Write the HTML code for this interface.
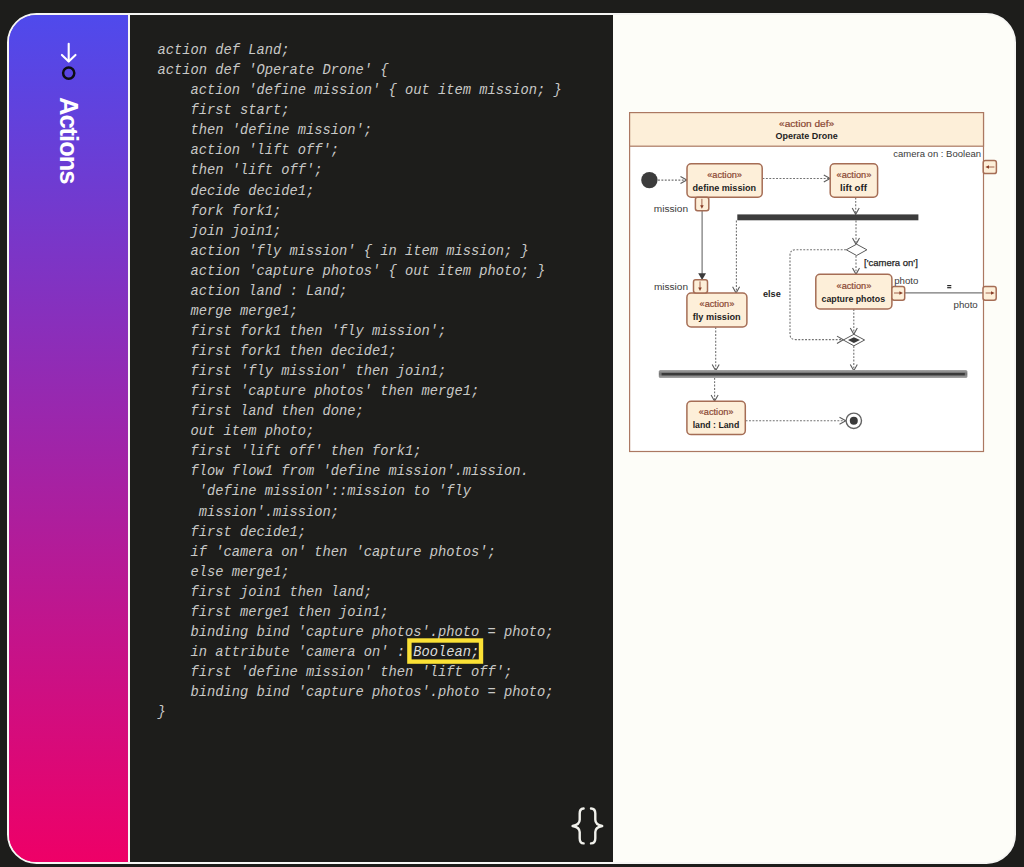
<!DOCTYPE html>
<html>
<head>
<meta charset="utf-8">
<title>Actions</title>
<style>
  html, body { margin: 0; padding: 0; }
  body {
    width: 1024px; height: 867px; overflow: hidden;
    background: #1d1d1b;
    font-family: "Liberation Sans", sans-serif;
    position: relative;
  }
  .frame {
    position: absolute; left: 6.5px; top: 13px;
    width: 1005.8px; height: 846.5px;
    border: 2px solid #f6f6f4;
    border-radius: 29.5px;
    overflow: hidden;
    background:
      linear-gradient(180deg, #4f4aec 0%, #ee0067 100%) 0 0 / 121px 100% no-repeat,
      linear-gradient(#fdfdf8, #fdfdf8) 100% 0 / 403px 100% no-repeat,
      #1d1d1b;
  }
  .side {
    position: absolute; left: 0; top: 0; width: 119.5px; height: 100%;
    background: linear-gradient(180deg, #4f4aec 0%, #ee0067 100%);
  }
  .divider {
    position: absolute; left: 119.5px; top: 0; width: 2.3px; height: 100%;
    background: #f6f6f4;
  }
  .code {
    position: absolute; left: 121.8px; top: 0; width: 483px; height: 100%;
    background: #1d1d1b;
  }
  .right {
    position: absolute; left: 604.6px; top: 0; right: 0; height: 100%;
    background: #fdfdf8;
  }
  .title {
    position: absolute; left: 0; top: 0;
    transform-origin: 0 0;
    transform: translate(71.5px, 82px) rotate(90deg);
    color: #ffffff; font-weight: bold; font-size: 25.5px;
    letter-spacing: -1.0px;
    white-space: nowrap; line-height: 1;
  }
  pre.src {
    position: absolute; left: 27.2px; top: 26.1px; margin: 0;
    font-family: "Liberation Mono", monospace;
    font-style: italic;
    font-size: 13.75px; line-height: 20.06px;
    color: #c9c9c7;
    white-space: pre;
  }
  .hl { color: #dcdcda; }
  .hlbox {
    position: absolute; left: 277.2px; top: 623.3px;
    width: 67.2px; height: 16.7px;
    border: 4.4px solid #fbe135;
  }
</style>
</head>
<body>
<div class="frame">
  <div class="side">
    <svg width="120" height="120" style="position:absolute;left:0;top:0" viewBox="0 0 120 120">
      <g fill="none" stroke="#ffffff" stroke-width="2.1" stroke-linecap="round" stroke-linejoin="round">
        <path d="M59.7 28.7 L59.7 46.2"/>
        <path d="M52.9 39.9 L59.7 46.5 L66.5 39.9"/>
      </g>
      <circle cx="59.7" cy="58.1" r="5.6" fill="none" stroke="#0d0d14" stroke-width="2.5"/>
    </svg>
    <div class="title">Actions</div>
  </div>
  <div class="divider"></div>
  <div class="code">
<pre class="src">action def Land;
action def 'Operate Drone' {
    action 'define mission' { out item mission; }
    first start;
    then 'define mission';
    action 'lift off';
    then 'lift off';
    decide decide1;
    fork fork1;
    join join1;
    action 'fly mission' { in item mission; }
    action 'capture photos' { out item photo; }
    action land : Land;
    merge merge1;
    first fork1 then 'fly mission';
    first fork1 then decide1;
    first 'fly mission' then join1;
    first 'capture photos' then merge1;
    first land then done;
    out item photo;
    first 'lift off' then fork1;
    flow flow1 from 'define mission'.mission.
     'define mission'::mission to 'fly
     mission'.mission;
    first decide1;
    if 'camera on' then 'capture photos';
    else merge1;
    first join1 then land;
    first merge1 then join1;
    binding bind 'capture photos'.photo = photo;
    in attribute 'camera on' : <span class="hl">Boolean;</span>
    first 'define mission' then 'lift off';
    binding bind 'capture photos'.photo = photo;
}</pre>
    <svg width="483" height="700" style="position:absolute;left:0;top:0;overflow:visible"><rect x="279.4" y="625.5" width="71.6" height="21.1" fill="none" stroke="#fbe135" stroke-width="4.4"/></svg>
    <svg width="40" height="44" viewBox="0 0 40 44" style="position:absolute;left:441px;top:790px">
      <g fill="none" stroke="#f1f1ec" stroke-width="2.4" stroke-linecap="round" stroke-linejoin="round">
        <path d="M12.6 3.5 C9.4 3.5 8.7 5.4 8.7 8.6 L8.7 14.8 C8.7 18.2 6 20.2 1.6 20.95 C6 21.7 8.7 23.7 8.7 27.1 L8.7 33.3 C8.7 36.5 9.4 38.4 12.6 38.4"/>
        <path d="M20 3.5 C23.4 3.5 24.3 5.4 24.3 8.6 L24.3 14.8 C24.3 18.2 27 20.2 31.2 20.95 C27 21.7 24.3 23.7 24.3 27.1 L24.3 33.3 C24.3 36.5 23.4 38.4 20 38.4"/>
      </g>
    </svg>
  </div>
  <div class="right">
    <!--DIAGRAM-->
  </div>
</div>
<!--SVGSTART-->
<svg width="1024" height="867" viewBox="0 0 1024 867" style="position:absolute;left:0;top:0" font-family="Liberation Sans, sans-serif">
  <defs>
    <linearGradient id="joing" x1="0" y1="0" x2="0" y2="1">
      <stop offset="0" stop-color="#a6a6a6"/><stop offset="0.3" stop-color="#858585"/><stop offset="0.5" stop-color="#707070"/><stop offset="0.7" stop-color="#858585"/><stop offset="1" stop-color="#a6a6a6"/>
    </linearGradient>
  </defs>
  <!-- outer action def frame -->
  <rect x="629.6" y="112.6" width="353.9" height="338.9" fill="#ffffff" stroke="#ab7862" stroke-width="1.2"/>
  <rect x="629.6" y="112.6" width="353.9" height="33.6" fill="#fdefd9" stroke="#ab7862" stroke-width="1.2"/>
  <text x="806.6" y="126.5" font-size="9.6" fill="#8a4632" stroke="#8a4632" stroke-width="0.2" text-anchor="middle" textLength="55.2" lengthAdjust="spacingAndGlyphs">«action def»</text>
  <text x="806.6" y="139.2" font-size="9" font-weight="bold" fill="#1e1e1e" text-anchor="middle" textLength="62.3" lengthAdjust="spacingAndGlyphs">Operate Drone</text>
  <text x="981" y="157.3" font-size="9.5" fill="#3a3a3a" text-anchor="end" textLength="87.7" lengthAdjust="spacingAndGlyphs">camera on : Boolean</text>

  <!-- edges: dotted control flows -->
  <g fill="none" stroke="#727272" stroke-width="1.1" stroke-dasharray="1.9 1.5">
    <path d="M658 180.1 H686"/>
    <path d="M762.5 178.5 H829.5"/>
    <path d="M855.7 197.5 V214"/>
    <path d="M856 220.5 V244"/>
    <path d="M856 255.8 V274"/>
    <path d="M736.4 220.5 V292.5"/>
    <path d="M846 249.7 H795.5 Q790 249.7 790 255.2 V334.1 Q790 339.6 795.5 339.6 H843"/>
    <path d="M853.8 309.2 V334"/>
    <path d="M853.8 346 V370.4"/>
    <path d="M715.7 327.2 V370.4"/>
    <path d="M714.6 377.8 V400.8"/>
    <path d="M745.6 420.8 H845.4"/>
  </g>
  <!-- open arrowheads -->
  <g fill="none" stroke="#5c5c5c" stroke-width="1.1">
    <path d="M680.5 176.6 L686.8 180.1 L680.5 183.6"/>
    <path d="M823.8 175 L830.1 178.5 L823.8 182"/>
    <path d="M852.2 208 L855.7 214.3 L859.2 208"/>
    <path d="M852.5 238 L856 244.3 L859.5 238"/>
    <path d="M852.5 268 L856 274.3 L859.5 268"/>
    <path d="M732.6 286.7 L736.1 293 L739.6 286.7"/>
    <path d="M837 336.1 L843.3 339.8 L837 343.5"/>
    <path d="M850.3 328 L853.8 334.3 L857.3 328"/>
    <path d="M850.3 364.4 L853.8 370.7 L857.3 364.4"/>
    <path d="M712.2 364.4 L715.7 370.7 L719.2 364.4"/>
    <path d="M711.1 394.9 L714.6 401.2 L718.1 394.9"/>
    <path d="M839.5 417.3 L845.8 420.8 L839.5 424.3"/>
  </g>

  <!-- initial node -->
  <circle cx="649.4" cy="180.1" r="8.2" fill="#3c3c3c"/>

  <!-- fork bar -->
  <rect x="737.3" y="214.4" width="181.1" height="5.9" fill="#3c3c3c"/>
  <!-- join bar -->
  <rect x="658.8" y="370" width="308.6" height="8" rx="1.6" fill="url(#joing)"/>
  <rect x="661.6" y="372.9" width="303.2" height="2.5" fill="#3a3a3a"/>

  <!-- decision -->
  <path d="M846.3 249.8 L856.6 244.2 L866.9 249.8 L856.6 255.5 Z" fill="#ffffff" stroke="#5a5a5a" stroke-width="1"/>
  <!-- merge -->
  <path d="M843.3 340 L853.9 334.3 L864.6 340 L853.9 345.8 Z" fill="#ffffff" stroke="#5a5a5a" stroke-width="1"/>
  <path d="M848 340 L853.9 337.2 L860 340 L853.9 342.9 Z" fill="#3a3a3a"/>

  <!-- final node -->
  <circle cx="853.8" cy="420.8" r="7.7" fill="#ffffff" stroke="#636363" stroke-width="1.4"/>
  <circle cx="853.8" cy="420.8" r="4" fill="#3a3a3a"/>

  <!-- solid object flow define mission.mission -> fly mission.mission -->
  <path d="M702.1 211 V275" stroke="#686868" stroke-width="1.1" fill="none"/>
  <path d="M698.2 273.3 H706 L702.1 280 Z" fill="#3a3a3a"/>
  <!-- binding line -->
  <path d="M904.6 292.9 H983" stroke="#777777" stroke-width="1.2" fill="none"/>
  <rect x="947.2" y="285" width="4.1" height="1.2" fill="#262626"/><rect x="947.2" y="287.1" width="4.1" height="1.2" fill="#262626"/>

  <!-- action boxes -->
  <g fill="#fdefd9" stroke="#a56d55" stroke-width="1.5">
    <rect x="687" y="163.8" width="75.2" height="33.4" rx="4.2"/>
    <rect x="830.2" y="163.8" width="47.4" height="33.4" rx="4.2"/>
    <rect x="686.9" y="293" width="60" height="33.9" rx="4.2"/>
    <rect x="815.8" y="274.3" width="76.1" height="34.6" rx="4.2"/>
    <rect x="686.9" y="401.2" width="58.4" height="33.4" rx="4.2"/>
    <!-- pins -->
    <rect x="695.4" y="197.2" width="13.4" height="13.6" rx="2.2"/>
    <rect x="693.5" y="279.8" width="14" height="13.2" rx="2.2"/>
    <rect x="891.9" y="286.6" width="12.8" height="13.6" rx="2.2"/>
    <rect x="983" y="286.6" width="13.2" height="13.6" rx="2.2"/>
    <rect x="983.2" y="160.5" width="13.2" height="13.1" rx="2.2"/>
  </g>
  <!-- pin arrows -->
  <g fill="none" stroke="#8a3f28" stroke-width="0.8">
    <path d="M701.9 198.8 V206.2"/>
    <path d="M700 281.4 V288.4"/>
    <path d="M894 293 H900.4"/>
    <path d="M985.6 293 H992"/>
    <path d="M994.4 167 H988"/>
  </g>
  <g fill="#8a3f28" stroke="none">
    <path d="M700.1 205.2 H703.7 L701.9 208.8 Z"/>
    <path d="M698.2 287.4 H701.8 L700 291 Z"/>
    <path d="M899.4 291.2 V294.8 L903 293 Z"/>
    <path d="M991 291.2 V294.8 L994.6 293 Z"/>
    <path d="M989 165.2 V168.8 L985.4 167 Z"/>
  </g>

  <!-- box labels -->
  <g font-size="9.3" fill="#8a4632" stroke="#8a4632" stroke-width="0.2" text-anchor="middle">
    <text x="724.6" y="177.8" textLength="34.7" lengthAdjust="spacingAndGlyphs">«action»</text>
    <text x="853.9" y="177.8" textLength="34.7" lengthAdjust="spacingAndGlyphs">«action»</text>
    <text x="716.9" y="307" textLength="34.7" lengthAdjust="spacingAndGlyphs">«action»</text>
    <text x="853.9" y="289" textLength="34.7" lengthAdjust="spacingAndGlyphs">«action»</text>
    <text x="716.1" y="415.4" textLength="34.7" lengthAdjust="spacingAndGlyphs">«action»</text>
  </g>
  <g font-size="9" font-weight="bold" fill="#1e1e1e" text-anchor="middle">
    <text x="724.3" y="191" textLength="63.4" lengthAdjust="spacingAndGlyphs">define mission</text>
    <text x="853.5" y="191" textLength="26.9" lengthAdjust="spacingAndGlyphs">lift off</text>
    <text x="716.7" y="319.8" textLength="47.9" lengthAdjust="spacingAndGlyphs">fly mission</text>
    <text x="853.3" y="302" textLength="63.5" lengthAdjust="spacingAndGlyphs">capture photos</text>
    <text x="716" y="428.1" textLength="46.6" lengthAdjust="spacingAndGlyphs">land : Land</text>
    <text x="771.9" y="297.4" textLength="17.8" lengthAdjust="spacingAndGlyphs">else</text>
  </g>
  <g font-size="9.6" fill="#3a3a3a">
    <text x="653.8" y="211.6" textLength="34.2" lengthAdjust="spacingAndGlyphs">mission</text>
    <text x="653.9" y="289.8" textLength="34.1" lengthAdjust="spacingAndGlyphs">mission</text>
    <text x="894.2" y="284" textLength="24.2" lengthAdjust="spacingAndGlyphs">photo</text>
    <text x="953.5" y="307.8" textLength="24.2" lengthAdjust="spacingAndGlyphs">photo</text>
    <text x="864" y="265.7" fill="#1e1e1e" stroke="#1e1e1e" stroke-width="0.25" textLength="53.8" lengthAdjust="spacingAndGlyphs">['camera on']</text>
  </g>
</svg>
<!--SVGEND-->
</body>
</html>
